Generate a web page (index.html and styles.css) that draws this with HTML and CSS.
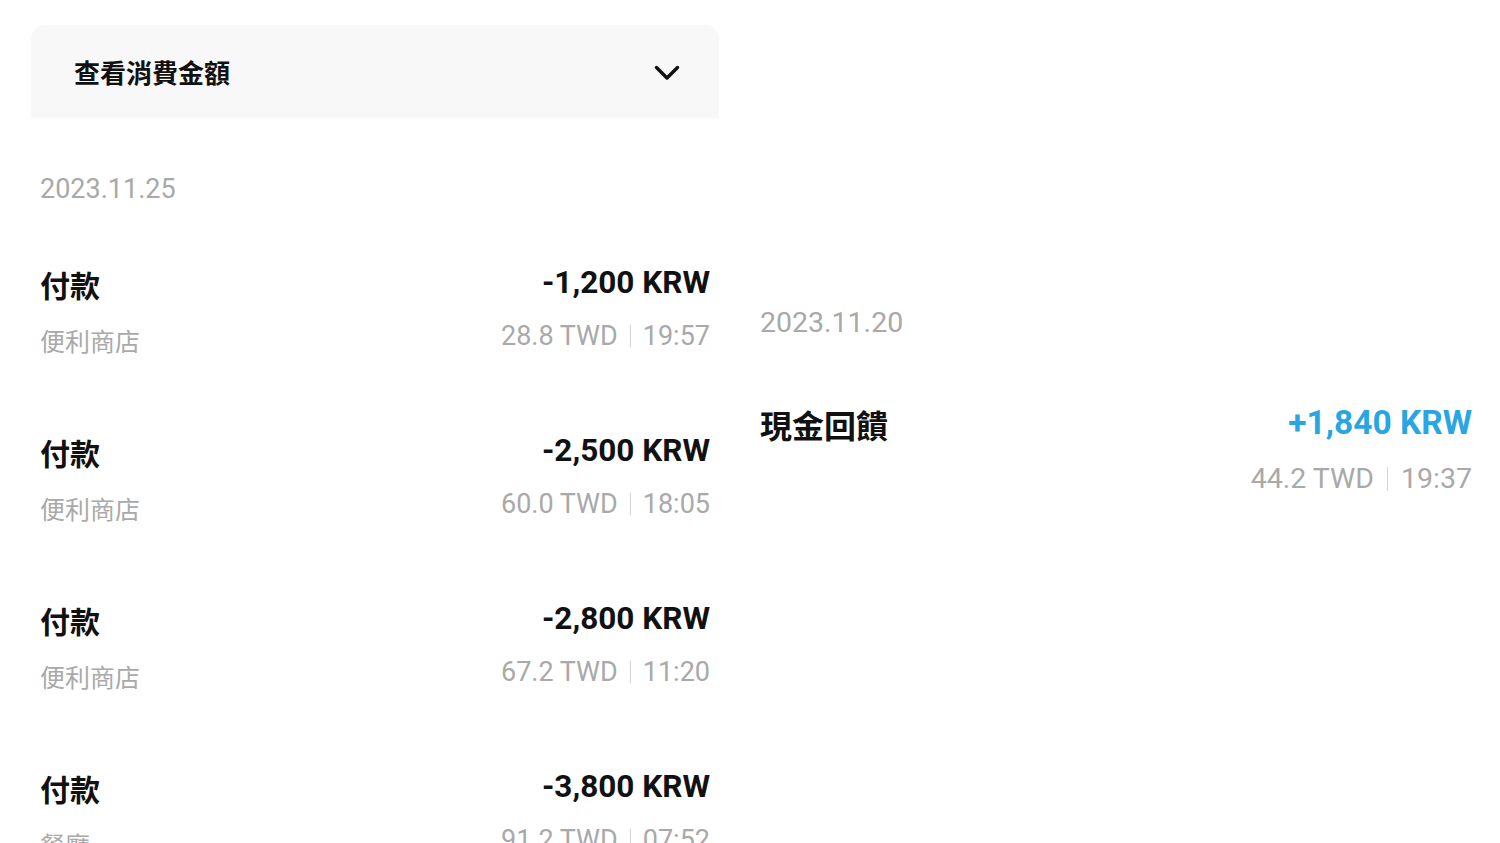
FILE: index.html
```html
<!DOCTYPE html>
<html lang="zh-Hant">
<head>
<meta charset="utf-8">
<title>消費紀錄</title>
<link rel="stylesheet" href="styles.css">
</head>
<body>
<div class="page">
  <section class="col col-left">
    <div class="filter">
      <span class="filter-title">查看消費金額</span>
      <svg class="chevron" width="26" height="16" viewBox="0 0 26 16"><path d="M2.5 2.5 L13 13 L23.5 2.5" fill="none" stroke="#111" stroke-width="3.4" stroke-linecap="round" stroke-linejoin="round"/></svg>
    </div>
    <div class="date date-first">2023.11.25</div>
    <div class="txn">
      <div class="txn-left"><div class="txn-title">付款</div><div class="txn-sub">便利商店</div></div>
      <div class="txn-right"><div class="amount">-1,200 KRW</div><div class="meta">28.8 TWD<span class="sep"></span>19:57</div></div>
    </div>
    <div class="txn">
      <div class="txn-left"><div class="txn-title">付款</div><div class="txn-sub">便利商店</div></div>
      <div class="txn-right"><div class="amount">-2,500 KRW</div><div class="meta">60.0 TWD<span class="sep"></span>18:05</div></div>
    </div>
    <div class="txn">
      <div class="txn-left"><div class="txn-title">付款</div><div class="txn-sub">便利商店</div></div>
      <div class="txn-right"><div class="amount">-2,800 KRW</div><div class="meta">67.2 TWD<span class="sep"></span>11:20</div></div>
    </div>
    <div class="txn">
      <div class="txn-left"><div class="txn-title">付款</div><div class="txn-sub">餐廳</div></div>
      <div class="txn-right"><div class="amount">-3,800 KRW</div><div class="meta">91.2 TWD<span class="sep"></span>07:52</div></div>
    </div>
  </section>
  <section class="col col-right">
    <div class="date date-second">2023.11.20</div>
    <div class="txn txn-cashback">
      <div class="txn-left"><div class="txn-title txn-title-lg">現金回饋</div></div>
      <div class="txn-right"><div class="amount amount-plus">+1,840 KRW</div><div class="meta">44.2 TWD<span class="sep"></span>19:37</div></div>
    </div>
  </section>
</div>
</body>
</html>
```
FILE: styles.css
```css
html, body {
  margin: 0;
  padding: 0;
  background: #ffffff;
  height: 100%;
  overflow: hidden;
}
body {
  font-family: Roboto, "Noto Sans CJK TC", sans-serif;
  color: #111111;
}
.page {
  display: flex;
  align-items: flex-start;
  padding-left: 31px;
  gap: 32px;
}
.col-left {
  width: 688px;
  flex: none;
}
.col-right {
  width: 721px;
  flex: none;
  padding-left: 9px;
  box-sizing: border-box;
  padding-top: 307px;
}
.filter {
  margin-top: 25px;
  height: 93px;
  background: #f8f8f8;
  border-radius: 14px 14px 0 0;
  display: flex;
  align-items: center;
  justify-content: space-between;
  padding: 0 39px 0 43px;
}
.filter-title {
  font-family: "Noto Sans CJK TC", sans-serif;
  font-size: 26px;
  font-weight: 700;
  line-height: 32px;
  color: #111;
}
.chevron {
  display: block;
  margin-top: 2px;
}
.date {
  font-family: Roboto, sans-serif;
  font-size: 27px;
  line-height: 32px;
  color: #a9a9a9;
}
.date-first {
  margin: 55px 9px 0;
}
.date-second {
  font-size: 28.5px;
}
.txn {
  display: flex;
  justify-content: space-between;
  padding: 0 9px;
  margin-top: 61px;
  height: 94px;
}
.txn + .txn {
  margin-top: 74px;
}
.col-right .txn {
  padding: 0;
  margin-top: 67px;
}
.txn-left, .txn-right {
  display: flex;
  flex-direction: column;
}
.txn-right {
  align-items: flex-end;
}
.txn-title {
  font-family: "Noto Sans CJK TC", sans-serif;
  font-size: 30px;
  font-weight: 700;
  line-height: 36px;
}
.txn-title-lg {
  font-size: 32px;
}
.txn-sub {
  font-family: "Noto Sans CJK TC", sans-serif;
  font-size: 25px;
  line-height: 36px;
  margin-top: 20px;
  color: #a9a9a9;
}
.amount {
  font-family: Roboto, sans-serif;
  font-size: 31.5px;
  font-weight: 700;
  line-height: 34px;
}
.amount-plus {
  color: #29a6e2;
  font-size: 33.5px;
}
.meta {
  font-family: Roboto, sans-serif;
  font-size: 27px;
  line-height: 36px;
  margin-top: 18px;
  color: #a9a9a9;
  display: flex;
  align-items: center;
}
.col-right .meta {
  margin-top: 21px;
  font-size: 28.5px;
}
.sep {
  display: inline-block;
  width: 1px;
  height: 22px;
  background: #d4d4d4;
  margin: 0 12px;
}
.col-right .sep {
  height: 24px;
  margin: 0 13px;
}
```
